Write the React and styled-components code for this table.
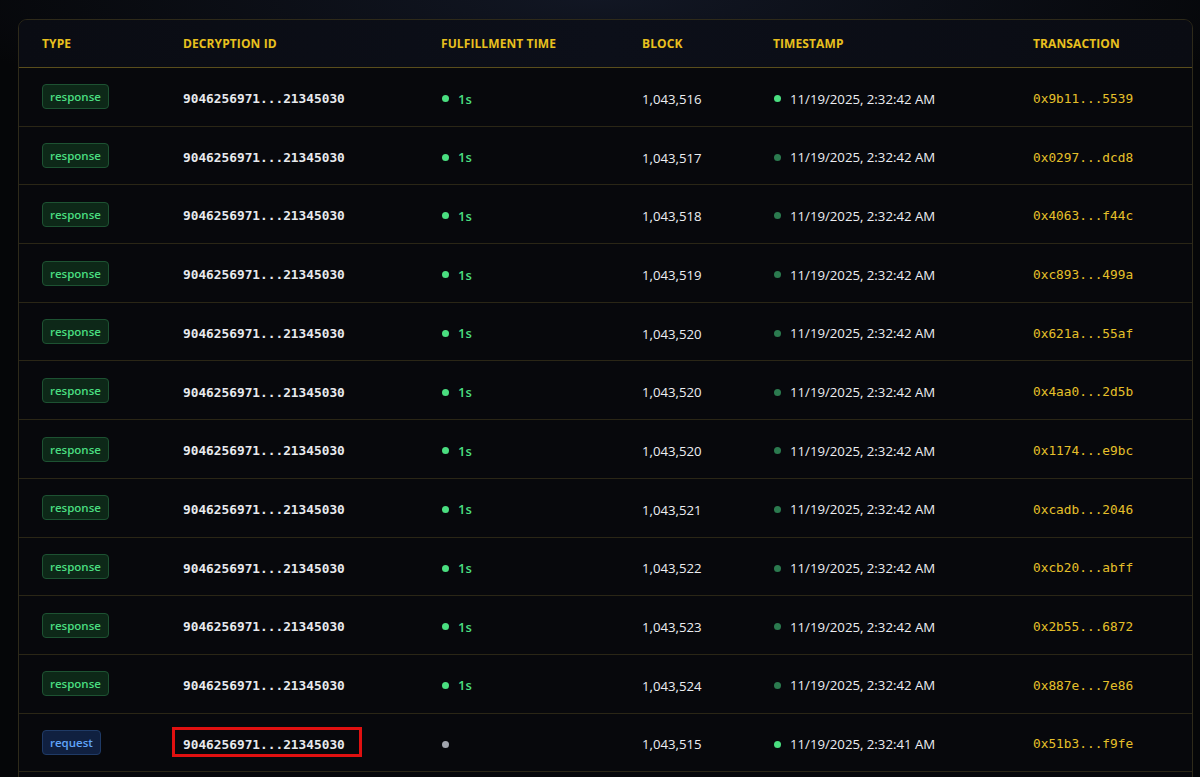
import React from 'react';
import styled, { createGlobalStyle } from 'styled-components';

const rows = [
  { type: 'response', block: '1,043,516', time: '11/19/2025, 2:32:42 AM', tx: '0x9b11...5539', fresh: true },
  { type: 'response', block: '1,043,517', time: '11/19/2025, 2:32:42 AM', tx: '0x0297...dcd8' },
  { type: 'response', block: '1,043,518', time: '11/19/2025, 2:32:42 AM', tx: '0x4063...f44c' },
  { type: 'response', block: '1,043,519', time: '11/19/2025, 2:32:42 AM', tx: '0xc893...499a' },
  { type: 'response', block: '1,043,520', time: '11/19/2025, 2:32:42 AM', tx: '0x621a...55af' },
  { type: 'response', block: '1,043,520', time: '11/19/2025, 2:32:42 AM', tx: '0x4aa0...2d5b' },
  { type: 'response', block: '1,043,520', time: '11/19/2025, 2:32:42 AM', tx: '0x1174...e9bc' },
  { type: 'response', block: '1,043,521', time: '11/19/2025, 2:32:42 AM', tx: '0xcadb...2046' },
  { type: 'response', block: '1,043,522', time: '11/19/2025, 2:32:42 AM', tx: '0xcb20...abff' },
  { type: 'response', block: '1,043,523', time: '11/19/2025, 2:32:42 AM', tx: '0x2b55...6872' },
  { type: 'response', block: '1,043,524', time: '11/19/2025, 2:32:42 AM', tx: '0x887e...7e86' },
  { type: 'request', block: '1,043,515', time: '11/19/2025, 2:32:41 AM', tx: '0x51b3...f9fe', fresh: true, marked: true },
];

const DECRYPTION_ID = '9046256971...21345030';

const App = () => {
  return (
    <Page>
      <GlobalStyle />
      <Card>
        <Table>
          <colgroup>
            <col style={{ width: 141 }} />
            <col style={{ width: 258 }} />
            <col style={{ width: 201 }} />
            <col style={{ width: 131 }} />
            <col style={{ width: 260 }} />
            <col />
          </colgroup>
          <thead>
            <HeadRow>
              <HeadCell>Type</HeadCell>
              <HeadCell>Decryption ID</HeadCell>
              <HeadCell>Fulfillment Time</HeadCell>
              <HeadCell>Block</HeadCell>
              <HeadCell>Timestamp</HeadCell>
              <HeadCell>Transaction</HeadCell>
            </HeadRow>
          </thead>
          <tbody>
            {rows.map((r, i) => (
              <Row key={i}>
                <Cell>
                  <Badge $kind={r.type}>{r.type}</Badge>
                </Cell>
                <Cell>
                  <MonoId $marked={r.marked}>{DECRYPTION_ID}</MonoId>
                </Cell>
                <Cell>
                  {r.type === 'response' ? (
                    <Status>
                      <Dot $color="#4ade80" />
                      <Duration>1s</Duration>
                    </Status>
                  ) : (
                    <Status>
                      <Dot $color="#a1a5ae" />
                    </Status>
                  )}
                </Cell>
                <Cell>
                  <Plain>{r.block}</Plain>
                </Cell>
                <Cell>
                  <Status>
                    <Dot $color={r.fresh ? '#4ade80' : '#2b7a4f'} />
                    <Plain>{r.time}</Plain>
                  </Status>
                </Cell>
                <Cell>
                  <TxHash>{r.tx}</TxHash>
                </Cell>
              </Row>
            ))}
          </tbody>
        </Table>
      </Card>
    </Page>
  );
};

export default App;

// ==========================
// Styled Components
// ==========================

const GlobalStyle = createGlobalStyle`
  html, body {
    margin: 0;
    padding: 0;
    background: #050608;
  }
  body {
    font-family: 'Open Sans', 'Noto Sans', sans-serif;
  }
`;

const Page = styled.div`
  width: 1200px;
  height: 777px;
  overflow: hidden;
  box-sizing: border-box;
  padding: 19px 7px 0 18px;
  background:
    radial-gradient(ellipse 700px 120px at 50% 0%, rgba(28, 36, 58, 0.55), rgba(5, 6, 8, 0) 100%),
    #050608;
`;

const Card = styled.div`
  min-height: 820px;
  border: 1px solid #2e2a1a;
  border-radius: 9px;
  background: #07080c;
  overflow: hidden;
`;

const Table = styled.table`
  width: 100%;
  border-collapse: collapse;
  table-layout: fixed;
`;

const HeadRow = styled.tr`
  background: linear-gradient(90deg, #0a0c13, #0c0f19 50%, #0a0c13);
  border-bottom: 1px solid #5a4e1c;
`;

const HeadCell = styled.th`
  height: 47px;
  padding: 0 0 0 23px;
  text-align: left;
  font-size: 12px;
  font-weight: 700;
  text-transform: uppercase;
  letter-spacing: 0.1px;
  color: #e8c01e;
  white-space: nowrap;
`;

const Row = styled.tr`
  border-bottom: 1px solid #2a2616;
  background: #07080c;
`;

const Cell = styled.td`
  height: 57.7px;
  padding: 0 0 0 23px;
  vertical-align: middle;
  white-space: nowrap;
`;

const Badge = styled.span`
  display: inline-flex;
  align-items: center;
  vertical-align: middle;
  box-sizing: border-box;
  height: 25px;
  padding: 0 7px;
  border-radius: 4px;
  font-size: 11.5px;
  font-weight: 600;
  border: 1px solid ${(p) => (p.$kind === 'request' ? '#1f3a66' : '#1d5232')};
  background: ${(p) => (p.$kind === 'request' ? '#102040' : '#0d2818')};
  color: ${(p) => (p.$kind === 'request' ? '#60a5fa' : '#4ade80')};
`;

const MonoId = styled.span`
  display: inline-block;
  vertical-align: middle;
  font-family: 'DejaVu Sans Mono', 'Liberation Mono', monospace;
  font-size: 12.8px;
  font-weight: 700;
  color: #e8eaee;
  ${(p) =>
    p.$marked &&
    `
    margin: -10px -17px -5px -11px;
    padding: 7px 14px 2px 8px;
    border: 3px solid #e01010;
  `}
`;

const Status = styled.span`
  display: inline-flex;
  align-items: center;
  vertical-align: middle;
  gap: 9px;
`;

const Dot = styled.span`
  width: 7px;
  height: 7px;
  border-radius: 50%;
  background: ${(p) => p.$color};
  margin-left: 1px;
`;

const Duration = styled.span`
  font-size: 13px;
  font-weight: 600;
  color: #4ade80;
`;

const Plain = styled.span`
  font-size: 13.2px;
  color: #eceef2;
  vertical-align: middle;
`;

const TxHash = styled.span`
  font-family: 'DejaVu Sans Mono', 'Liberation Mono', monospace;
  font-size: 12.8px;
  font-weight: 400;
  color: #e6c02a;
  vertical-align: middle;
`;
